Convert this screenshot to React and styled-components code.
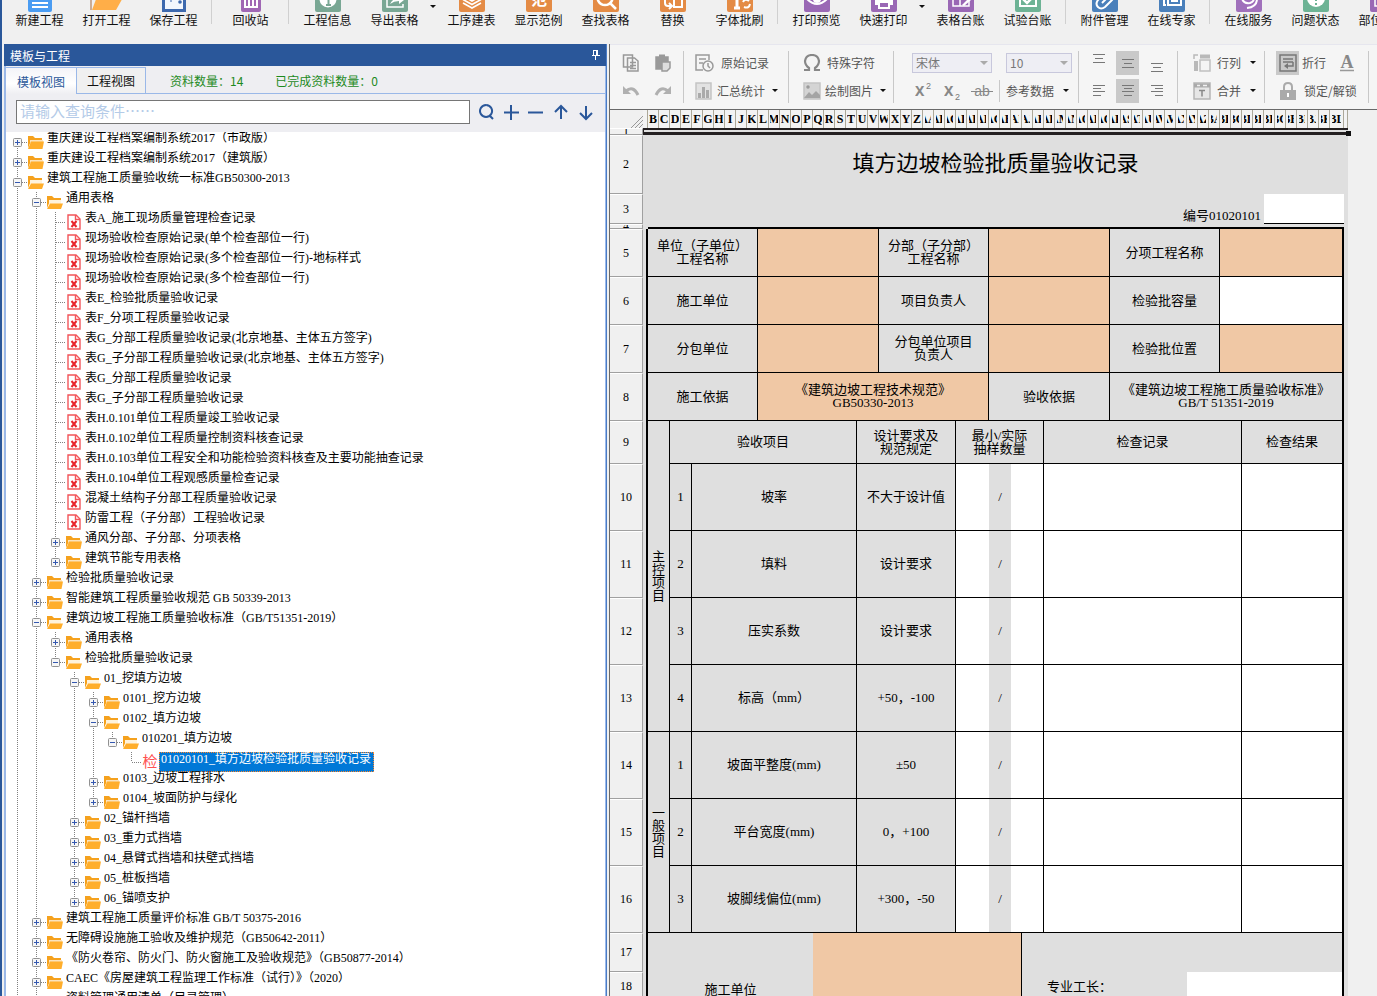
import { useState } from 'react'
import styled, { createGlobalStyle, css } from 'styled-components'

const SANS = "'Noto Sans CJK SC', sans-serif"
const SONG = "'Liberation Serif', 'Noto Sans CJK SC', serif"

const GlobalStyle = createGlobalStyle`
  * { box-sizing: border-box; }
  body {
    margin: 0;
    background: #f0f0f0;
    font-family: ${SANS};
    font-size: 12px;
    color: #000;
  }
  button, input, select {
    font-family: inherit;
    font-size: 12px;
    margin: 0;
    padding: 0;
  }
  svg { display: block; flex: none; }
`

const Page = styled.div`
  display: flex;
  flex-direction: column;
  height: 100vh;
  overflow: hidden;
  border-left: 2px solid #2a579a;
  background: #f0f0f0;
`

/* ---------- ribbon ---------- */
const Ribbon = styled.header`
  display: flex;
  align-items: flex-end;
  flex: none;
  height: 44px;
  padding: 0 0 16px 4px;
  overflow: hidden;
`
const RibbonButton = styled.button`
  display: flex;
  flex-direction: column;
  align-items: center;
  flex: none;
  width: 67px;
  border: none;
  background: none;
  line-height: 16px;
  white-space: nowrap;
  color: #111;
`
const RibbonArrow = styled.button`
  display: flex;
  align-items: center;
  justify-content: center;
  flex: none;
  width: 10px;
  height: 44px;
  border: none;
  background: none;
`
const RibbonDivider = styled.div`
  flex: none;
  width: 1px;
  height: 28px;
  margin: 0 5px 4px 4px;
  background: #d0d0d0;
`
const Triangle = styled.span`
  width: 0;
  height: 0;
  border: 3px solid transparent;
  border-top: 3px solid #111;
  border-bottom: none;
`

/* ---------- main area ---------- */
const Workspace = styled.main`
  display: flex;
  flex: 1;
  min-height: 0;
`
const SidePanel = styled.section`
  display: flex;
  flex-direction: column;
  flex: none;
  width: 605px;
  padding-left: 2px;
  border-right: 1px solid #4a7cc6;
`
const PanelTitle = styled.div`
  display: flex;
  align-items: center;
  justify-content: space-between;
  height: 22px;
  padding: 0 6px;
  background: #2a579a;
  color: #fff;
`
const PanelBody = styled.div`
  display: flex;
  flex-direction: column;
  flex: 1;
  min-height: 0;
  border: 1px solid #9ab8e8;
  border-width: 0 1px 0 2px;
  background: #eeeef2;
`
const TabBar = styled.div`
  display: flex;
  height: 28px;
  padding-top: 1px;
`
const Tab = styled.button`
  width: 70px;
  border: 1px solid #9ab8e8;
  background: #f0f0f0;
  color: #111;
  ${({ $active }) => $active && css`
    border-width: 1px 0 0 0;
    background: linear-gradient(#f4f4f8, #fff 60%, #eeeef2);
    color: #2a579a;
  `}
`
const Counters = styled.div`
  display: flex;
  align-items: center;
  flex: 1;
  gap: 32px;
  padding-left: 24px;
  border-bottom: 1px solid #9ab8e8;
  color: #1d8a1d;
`
const SearchRow = styled.div`
  display: flex;
  align-items: center;
  gap: 7px;
  height: 38px;
  padding: 0 10px 2px;
`
const SearchInput = styled.input`
  flex: 1;
  height: 24px;
  padding: 0 3px 4px;
  border: 1px solid #767676;
  border-radius: 0;
  background: #fff;
  font-size: 15px;
  &::placeholder { color: #b4cbe8; }
`
const ToolButton = styled.button`
  display: flex;
  align-items: center;
  justify-content: center;
  width: 18px;
  height: 24px;
  border: none;
  background: none;
`
const Tree = styled.ul`
  flex: 1;
  min-height: 0;
  margin: 0;
  padding: 0 0 0 2px;
  overflow: hidden;
  list-style: none;
  background: #fff;
  font-family: ${SONG};
`
const TreeRow = styled.li`
  display: flex;
  align-items: center;
  height: 20px;
`
const Expander = styled.button`
  display: block;
  border: none;
  background: none;
`
const NodeIcon = styled.span`
  display: flex;
  justify-content: center;
  flex: none;
  width: 18px;
`
const NodeLabel = styled.span`
  height: 20px;
  padding: 0 2px 0 1px;
  line-height: 13px;
  white-space: nowrap;
  border: 1px solid transparent;
  border-top: none;
  ${({ $selected }) => $selected && css`
    background: #0078d7;
    color: #fff;
    border: 1px dotted #ff8728;
    line-height: 12px;
  `}
`

/* ---------- editor toolbar ---------- */
const Editor = styled.section`
  display: flex;
  flex-direction: column;
  flex: 1;
  min-width: 0;
  margin-left: 2px;
  border-left: 1px solid #696969;
`
const Toolbar = styled.div`
  display: flex;
  align-items: center;
  flex: none;
  height: 66px;
  padding-bottom: 1px;
  overflow: hidden;
  background: #f5f5f5;
  border-top: 1px solid #e6e6ee;
  border-bottom: 1px solid #696969;
  color: #555;
`
const ToolGroup = styled.div`
  display: flex;
  flex-direction: column;
  flex: none;
  gap: 4px;
  width: ${({ $width }) => $width}px;
  height: 52px;
  padding-left: ${({ $pad }) => $pad || 11}px;
  border-right: 1px solid #c8c8c8;
`
const ToolLine = styled.div`
  display: flex;
  align-items: center;
  height: 24px;
  gap: ${({ $gap }) => $gap || 0}px;
`
const TextTool = styled.button`
  display: flex;
  align-items: center;
  gap: ${({ $gap }) => $gap || 6}px;
  height: 24px;
  border: none;
  background: none;
  color: #555;
  white-space: nowrap;
  ${Triangle} { margin-left: 3px; }
`
const IconTool = styled.button`
  display: flex;
  align-items: center;
  justify-content: center;
  width: 23px;
  height: 24px;
  border: none;
  background: ${({ $active }) => ($active ? '#c9c9c9' : 'none')};
`
const SelectBox = styled.div`
  position: relative;
  width: ${({ $width }) => $width}px;
  ${Triangle} {
    position: absolute;
    right: 4px;
    top: 8px;
    border-width: 4px;
    border-bottom: none;
    border-top-color: #aaa;
    pointer-events: none;
  }
`
const Select = styled.select`
  appearance: none;
  display: block;
  width: 100%;
  height: 20px;
  padding-left: 3px;
  border: 1px solid #c8c8dc;
  border-radius: 0;
  background: #eeeef4;
  color: #777;
`
const SmallDivider = styled.span`
  width: 1px;
  height: 22px;
  background: #c8c8c8;
`

/* ---------- sheet ---------- */
const SheetArea = styled.div`
  flex: 1;
  min-height: 0;
  overflow: hidden;
`
const Sheet = styled.table`
  table-layout: fixed;
  width: 738px;
  border-collapse: separate;
  border-spacing: 0;
  background: #dfdfdf;
  font-family: ${SONG};
  font-size: 13px;
  line-height: 13px;
`
const ColHead = styled.th`
  height: 18px;
  padding: 0 1px;
  border-right: 1px solid #aca899;
  background: #f3f3f3;
  font-size: 12px;
  font-weight: bold;
  div {
    display: flex;
    justify-content: center;
    overflow: hidden;
    margin: 0 ${({ $wide }) => ($wide ? 1 : 0)}px;
  }
`
const Corner = styled.th`
  padding: 0;
  background: #f0f0f0;
  vertical-align: bottom;
  svg { margin-left: auto; }
`
const RowHead = styled.th`
  height: ${({ $h }) => $h}px;
  padding: 0;
  border-top: 1px solid #fff;
  border-right: 1px solid #a0a0a0;
  border-bottom: 1px solid #a0a0a0;
  background: #f0f0f0;
  font-weight: normal;
  font-size: 12px;
  text-align: center;
  div {
    height: ${({ $h }) => Math.min($h - 2, 13)}px;
    line-height: ${({ $h }) => Math.min($h - 2, 13)}px;
    overflow: hidden;
  }
`
const fills = { gray: '#dfdfdf', peach: '#f0c8a5', white: '#fff' }
const Cell = styled.td`
  padding: 0 0 1px;
  text-align: center;
  white-space: pre-line;
  background: ${({ $fill }) => fills[$fill || 'gray']};
  border-bottom: ${({ $open }) => ($open ? 'none' : '1px solid #000')};
  border-right: ${({ $open, $last, $noRight }) => ($last ? '2px solid #000' : $open || $noRight ? 'none' : '1px solid #000')};
`
const EdgeCell = styled.td`
  padding: 0;
  border-right: 2px solid #000;
`
const PlainCell = styled.td`
  padding: 0 3px;
  text-align: ${({ $align }) => $align || 'left'};
`
const TitleCell = styled(PlainCell)`
  padding-bottom: 8px;
  font-family: ${SANS};
  font-size: 22px;
  line-height: 28px;
`
const NumberCell = styled(PlainCell)`
  vertical-align: bottom;
  padding-bottom: 2px;
`
const NumberBox = styled.td`
  padding: 0;
  background: #fff;
  border-bottom: 1px solid #000;
`
const TopEdge = styled.td`
  padding: 0;
  border-bottom: 2px solid #000;
`
const SelectedRange = styled.td`
  position: relative;
  padding: 0;
  border: solid #231f20;
  border-width: 2px 0 3px 1px;
  &::after {
    content: '';
    position: absolute;
    right: -3px;
    top: 1px;
    width: 5px;
    height: 5px;
    background: #111;
  }
`

/* ---------- drawings ---------- */
const ribbonArt = {
  new: (
    <>
      <rect x="1" width="24" height="26" rx="2" fill="#4a9cf2" />
      <path d="M5 13h16M5 17h16M5 21h16" stroke="#fff" strokeWidth="2" />
    </>
  ),
  open: (
    <>
      <path d="M-3 24V6h24v6" fill="none" stroke="#a5683c" />
      <path d="M4 8h27l-9 16H-2z" fill="#ffae48" />
    </>
  ),
  save: (
    <>
      <rect x="2.5" y="1.5" width="21" height="23" fill="#f3f7fd" stroke="#3d69ae" strokeWidth="3" />
      <circle cx="19" cy="16" r="1.8" fill="#3d69ae" />
      <path d="M10 12v4" stroke="#3d69ae" />
    </>
  ),
  bin: (
    <>
      <path d="M3 6h20v18q0 2-2 2H5q-2 0-2-2z" fill="#a067b4" />
      <path d="M7 8h12v13H7zM11 8v13M15 8v13" fill="none" stroke="#fff" strokeWidth="2" />
    </>
  ),
  info: (
    <>
      <circle cx="13" cy="13" r="8.5" fill="#fff" />
      <path d="M11 12h2.5v7M11 19h5" stroke="#79a794" strokeWidth="2" fill="none" />
    </>
  ),
  exportTable: (
    <>
      <path d="M5 10v11h16v-3" stroke="#fff" strokeWidth="1.5" fill="none" />
      <path d="M8 18q3-6 9-6V9l5 5-5 4v-3q-5 0-9 3z" fill="#fff" />
    </>
  ),
  layers: (
    <path d="M13 5l9 5-9 5-9-5zM4 13.500l9 5 9-5M4 17l9 5 9-5" stroke="#fff" strokeWidth="1.600" fill="none" />
  ),
  sample: <text x="13" y="19" textAnchor="middle" fontSize="16" fontWeight="bold" fill="#fff">范</text>,
  find: (
    <path d="M12 4a7.500 7.500 0 1 0 .1 0M17 17l6 6" stroke="#fff" strokeWidth="2.500" fill="none" />
  ),
  replace: (
    <>
      <rect x="14" y="13" width="8" height="8" fill="none" stroke="#fff" strokeWidth="2" />
      <path d="M5 12v5q0 3 3 3h3M9 17l3 3-3 3" stroke="#fff" strokeWidth="2" fill="none" />
    </>
  ),
  fontBrush: (
    <>
      <path d="M4 8h12M10 8v14M7 22h6" stroke="#fff" strokeWidth="3" />
      <path d="M16 16q2-4 6-1M23 18q-1 5-6 3" stroke="#fff" strokeWidth="2" fill="none" />
    </>
  ),
  eye: (
    <>
      <path d="M3 13q10-10 20 0-10 10-20 0z" fill="none" stroke="#fff" strokeWidth="2" />
      <circle cx="13" cy="13" r="4" fill="#fff" />
    </>
  ),
  printer: (
    <>
      <path d="M4 10h18v9H4z" fill="#fff" />
      <path d="M8 16h10v6H8z" fill="#9a68b5" stroke="#fff" strokeWidth="2" />
    </>
  ),
  ledger: (
    <>
      <path d="M5 5h16v15H5zM5 13h16M12 5v15" fill="none" stroke="#fff" strokeWidth="1.500" />
      <path d="M14 19l7-7 2 2-7 6z" fill="#fff" />
    </>
  ),
  check: (
    <>
      <path d="M5 5h16v15H5z" fill="none" stroke="#fff" strokeWidth="2" />
      <path d="M8 13l4 4 7-7" fill="none" stroke="#fff" strokeWidth="2.500" />
    </>
  ),
  clip: (
    <path d="M10 17l7-7q3-2 4 0t-1 4l-7 7q-4 3-7 0t0-7l6-6" fill="none" stroke="#fff" strokeWidth="2" />
  ),
  expert: (
    <>
      <path d="M9 6h13v13H9zM5 10v9h2" fill="none" stroke="#fff" strokeWidth="2" />
      <path d="M12 15h7" stroke="#fff" strokeWidth="2" />
    </>
  ),
  headset: (
    <path d="M5 14q0-8 8-8t8 8M6 12q1 6 8 5q5-2 3-5M21 14q-1 7-10 8" fill="none" stroke="#fff" strokeWidth="2" />
  ),
  question: (
    <>
      <circle cx="13" cy="12" r="9" fill="#fff" />
      <path d="M10 9q3-4 5-1t-2 5v2M13 17v2" fill="none" stroke="#6db395" strokeWidth="2" />
    </>
  ),
}

const RibbonIcon = ({ name, color }) => (
  <svg width="26" height="26" overflow="visible" aria-hidden="true">
    {color && <rect width="26" height="26" rx="2" fill={color} />}
    {ribbonArt[name]}
  </svg>
)

const GREEN = '#79a794'
const ORANGE = '#e48b45'
const PURPLE = '#9a68b5'
const BLUE = '#4a80bb'
const ribbonItems = [
  ['新建工程', 'new'], ['打开工程', 'open'], ['保存工程', 'save'], '|',
  ['回收站', 'bin'], '|',
  ['工程信息', 'info', GREEN], ['导出表格', 'exportTable', GREEN], 'v',
  ['工序建表', 'layers', ORANGE], ['显示范例', 'sample', ORANGE], ['查找表格', 'find', ORANGE],
  ['替换', 'replace', ORANGE], ['字体批刷', 'fontBrush', ORANGE], '|',
  ['打印预览', 'eye', PURPLE], ['快速打印', 'printer', PURPLE], 'v',
  ['表格台账', 'ledger', PURPLE], ['试验台账', 'check', '#6db395'], '|',
  ['附件管理', 'clip', BLUE], ['在线专家', 'expert', BLUE], '|',
  ['在线服务', 'headset', '#a070bb'], ['问题状态', 'question', '#6db395'], ['部位管理', 'ledger', PURPLE],
]

const FolderIcon = ({ open }) => (
  <svg width="16" height="13" aria-hidden="true">
    <path d="M0 0h5l2 2h7v3H3L0 12z" fill="#f5a11d" />
    {open
      ? <><path d="M2 4h12v4H2z" fill="#fff3dc" /><path d="M3 7.500h13L14 13H0z" fill="#ffae2b" /></>
      : <><path d="M2 4h13v2H2z" fill="#fbe3bc" /><path d="M3 5.500h13L14.500 13H0z" fill="#ffae2b" /></>}
  </svg>
)

const FileIcon = () => (
  <svg width="14" height="16" aria-hidden="true">
    <path d="M1 1h8l4 4v10H1z" fill="#fff" stroke="#f2555a" strokeWidth="1.400" />
    <path d="M8.500 1v4.500H13" fill="none" stroke="#f2555a" strokeWidth="1.400" />
    <path d="M4.500 7l5 6M9.500 7l-5 6" stroke="#e8252c" strokeWidth="2" />
  </svg>
)

const CheckGlyph = styled.span`
  color: #ff5050;
  font-size: 15px;
  line-height: 18px;
`

/* one 19x20 cell of the dotted guide lines */
const Guide = ({ up, down, across, box, open }) => (
  <svg width="19" height="20" aria-hidden="true">
    <g stroke="#808080" strokeDasharray="1 1">
      {up && <path d="M9.500 0V10" />}
      {down && <path d="M9.500 10V20" />}
      {across && <path d="M10 10.500H19" />}
    </g>
    {box && (
      <>
        <rect x="5.500" y="6.500" width="8" height="8" rx="1" fill="#f6f6f6" stroke="#919191" />
        <path d={open ? 'M7 10.500h5' : 'M7 10.500h5M9.500 8v5'} stroke="#3458b0" />
      </>
    )}
  </svg>
)

/* [depth, kind, label] : + closed folder, - open folder, f form, s selected form */
const nodes = [
  [0, '+', '重庆建设工程档案编制系统2017（市政版）'],
  [0, '+', '重庆建设工程档案编制系统2017（建筑版）'],
  [0, '-', '建筑工程施工质量验收统一标准GB50300-2013'],
  [1, '-', '通用表格'],
  [2, 'f', '表A_施工现场质量管理检查记录'],
  [2, 'f', '现场验收检查原始记录(单个检查部位一行)'],
  [2, 'f', '现场验收检查原始记录(多个检查部位一行)-地标样式'],
  [2, 'f', '现场验收检查原始记录(多个检查部位一行)'],
  [2, 'f', '表E_检验批质量验收记录'],
  [2, 'f', '表F_分项工程质量验收记录'],
  [2, 'f', '表G_分部工程质量验收记录(北京地基、主体五方签字)'],
  [2, 'f', '表G_子分部工程质量验收记录(北京地基、主体五方签字)'],
  [2, 'f', '表G_分部工程质量验收记录'],
  [2, 'f', '表G_子分部工程质量验收记录'],
  [2, 'f', '表H.0.101单位工程质量竣工验收记录'],
  [2, 'f', '表H.0.102单位工程质量控制资料核查记录'],
  [2, 'f', '表H.0.103单位工程安全和功能检验资料核查及主要功能抽查记录'],
  [2, 'f', '表H.0.104单位工程观感质量检查记录'],
  [2, 'f', '混凝土结构子分部工程质量验收记录'],
  [2, 'f', '防雷工程（子分部）工程验收记录'],
  [2, '+', '通风分部、子分部、分项表格'],
  [2, '+', '建筑节能专用表格'],
  [1, '+', '检验批质量验收记录'],
  [1, '+', '智能建筑工程质量验收规范 GB 50339-2013'],
  [1, '-', '建筑边坡工程施工质量验收标准（GB/T51351-2019）'],
  [2, '+', '通用表格'],
  [2, '-', '检验批质量验收记录'],
  [3, '-', '01_挖填方边坡'],
  [4, '+', '0101_挖方边坡'],
  [4, '-', '0102_填方边坡'],
  [5, '-', '010201_填方边坡'],
  [6, 's', '01020101_填方边坡检验批质量验收记录'],
  [4, '+', '0103_边坡工程排水'],
  [4, '+', '0104_坡面防护与绿化'],
  [3, '+', '02_锚杆挡墙'],
  [3, '+', '03_重力式挡墙'],
  [3, '+', '04_悬臂式挡墙和扶壁式挡墙'],
  [3, '+', '05_桩板挡墙'],
  [3, '+', '06_锚喷支护'],
  [1, '+', '建筑工程施工质量评价标准 GB/T 50375-2016'],
  [1, '+', '无障碍设施施工验收及维护规范（GB50642-2011）'],
  [1, '+', '《防火卷帘、防火门、防火窗施工及验收规范》（GB50877-2014）'],
  [1, '+', 'CAEC《房屋建筑工程监理工作标准（试行）》（2020）'],
  [1, '+', '资料管理通用清单（目录管理）'],
]

// whether the guide line at this depth goes on below row i
const continues = (i, depth) => {
  if (depth < 2) return true
  for (let j = i + 1; j < nodes.length; j++) {
    if (nodes[j][0] < depth) return false
    if (nodes[j][0] === depth) return true
  }
  return false
}

const TreeView = () => (
  <Tree>
    {nodes.map(([depth, kind, label], i) => {
      const folder = kind === '+' || kind === '-'
      const open = kind === '-'
      const guide = <Guide up={i > 0} down={continues(i, depth)} across box={folder} open={open} />
      return (
        <TreeRow key={i}>
          {Array.from({ length: depth }, (_, d) => {
            const on = continues(i, d)
            return <Guide key={d} up={on} down={on} />
          })}
          {folder ? <Expander aria-label={label}>{guide}</Expander> : guide}
          <NodeIcon>
            {folder && <FolderIcon open={open} />}
            {kind === 'f' && <FileIcon />}
            {kind === 's' && <CheckGlyph>检</CheckGlyph>}
          </NodeIcon>
          <NodeLabel $selected={kind === 's'}>{label}</NodeLabel>
        </TreeRow>
      )
    })}
  </Tree>
)

const panelTools = [
  ['查找', 'M8 2a6 6 0 1 0 .1 0M12 13l3 3'],
  ['展开', 'M8 2v15M1 9.500h15'],
  ['收起', 'M0 9.500h15'],
  ['上移', 'M8 16V3M2 9l6-6 6 6'],
  ['下移', 'M8 3v13M2 10l6 6 6-6'],
]

const Gray = ({ children, w = 18 }) => (
  <svg width={w} height="18" fill="none" stroke="#999" strokeWidth="1.500" aria-hidden="true">{children}</svg>
)

const CopyIcon = () => <Gray><path d="M1.500 1h9v12h-9zM5.500 4h7l3.500 3v10H5.500z" fill="#f5f5f5" /><path d="M8 8.500h6M8 11.500h6M8 14.500h6" /></Gray>
const PasteIcon = () => <Gray><path d="M2 3h12v12H2z" fill="#999" /><path d="M5 2h6" strokeWidth="3" /><path d="M8 8h8v6l-3 3H8z" fill="#ddd" /></Gray>
const UndoIcon = () => <Gray><path d="M1 4v8h8z" fill="#b0b0b0" stroke="none" /><path d="M4 9q7-6 12 4" stroke="#b0b0b0" strokeWidth="3" /></Gray>
const RedoIcon = () => <Gray><path d="M17 4v8H9z" fill="#b0b0b0" stroke="none" /><path d="M14 9Q7 3 2 13" stroke="#b0b0b0" strokeWidth="3" /></Gray>
const RecordIcon = () => <Gray w={20}><path d="M14 6V1H1v15h7M4 5h7M4 9h4" /><circle cx="13" cy="12" r="5" fill="#f5f5f5" /><path d="M13 9v3l2 2" /></Gray>
const ChartIcon = () => <Gray><path d="M1 1h15v16H1z" stroke="#c4c4c4" fill="#e2e2e2" /><path d="M4.500 16v-5M8.500 16V5M12.500 16V8" strokeWidth="3" stroke="#aaa" /></Gray>
const OmegaIcon = () => <Gray><path d="M1 16h5v-2Q2 11 2 7q1-6 7-6t7 6q0 4-4 7v2h5" stroke="#888" strokeWidth="2.200" /></Gray>
const PictureIcon = () => <Gray><path d="M1 1h16v16H1z" fill="#d4d4d4" stroke="#c4c4c4" /><path d="M1 16l5-6 3 3 4-4 4 4v3z" fill="#a4a4a4" stroke="none" /><circle cx="5" cy="5" r="1" /></Gray>
const RowColIcon = () => <Gray><path d="M7 6h10v11H7z" stroke="#c0c0c0" /><path d="M7 2.500h10M3 7v10" strokeWidth="4" stroke="#b9b9b9" /><path d="M1 5V1h4" stroke="#b9b9b9" /></Gray>
const MergeIcon = () => <Gray><path d="M1 1h16v16H1z" fill="#e6e6e6" stroke="#b5b5b5" /><path d="M1 3.500h16" strokeWidth="4" stroke="#aaa" /><path d="M4 3.500h3M10 3.500h4" stroke="#f0f0f0" /><path d="M6 8.500h6M9 8.500v6" stroke="#888" /></Gray>
const WrapIcon = () => <Gray><path d="M1 1h16v16H1z" stroke="#777" /><path d="M4 5h10M4 8h10M14 8v4H9" stroke="#777" /><path d="M9 9v6l-4-3z" fill="#777" stroke="none" /></Gray>
const LockIcon = () => <Gray w={16}><path d="M4 9V5q0-4 4-4t4 4v4" strokeWidth="2" stroke="#aaa" /><path d="M0 8h16v10H0z" fill="#aaa" stroke="none" /><path d="M8 11v4" stroke="#fff" strokeWidth="2" /></Gray>
const FontColorIcon = () => (
  <Gray>
    <text x="9" y="14" textAnchor="middle" fontSize="18" fontWeight="bold" fontFamily="Liberation Serif" fill="#888" stroke="none">A</text>
    <path d="M2 16.500h14" stroke="#999" />
  </Gray>
)
const StrikeIcon = () => (
  <Gray w={22}>
    <text x="11" y="14" textAnchor="middle" fontSize="14" fontFamily="Liberation Sans" fill="#888" stroke="none">ab</text>
    <path d="M0 9.500h22" stroke="#888" strokeWidth="1" />
  </Gray>
)
const ScriptIcon = ({ sup }) => (
  <Gray>
    <text x="0" y="14" fontSize="14" fontWeight="bold" fontFamily="Noto Sans" fill="#888" stroke="none">X</text>
    <text x="11" y={sup ? 7 : 18} fontSize="9" fontFamily="Liberation Sans" fill="#777" stroke="none">2</text>
  </Gray>
)

const alignTools = [
  [['顶端对齐', 'M3 0.500h12M5 4.500h8M3 8.500h12'], ['垂直居中', 'M3 5.500h12M5 9.500h8M3 13.500h12', true], ['底端对齐', 'M3 9.500h12M5 13.500h8M3 17.500h12']],
  [['左对齐', 'M3 3.500h12M3 6.500h8M3 9.500h12M3 13.500h8'], ['水平居中', 'M3 3.500h12M5 6.500h8M3 9.500h12M5 13.500h8', true], ['右对齐', 'M3 3.500h12M7 6.500h8M3 9.500h12M7 13.500h8']],
]

const EditorToolbar = () => (
  <Toolbar>
    <ToolGroup $width={74} $pad={9}>
      <ToolLine $gap={9}>
        <IconTool aria-label="复制"><CopyIcon /></IconTool>
        <IconTool aria-label="粘贴"><PasteIcon /></IconTool>
      </ToolLine>
      <ToolLine $gap={9}>
        <IconTool aria-label="撤销"><UndoIcon /></IconTool>
        <IconTool aria-label="重做"><RedoIcon /></IconTool>
      </ToolLine>
    </ToolGroup>
    <ToolGroup $width={105}>
      <ToolLine><TextTool><RecordIcon />原始记录</TextTool></ToolLine>
      <ToolLine><TextTool $gap={4}><ChartIcon />汇总统计<Triangle /></TextTool></ToolLine>
    </ToolGroup>
    <ToolGroup $width={105} $pad={14}>
      <ToolLine><TextTool><OmegaIcon />特殊字符</TextTool></ToolLine>
      <ToolLine><TextTool $gap={4}><PictureIcon />绘制图片<Triangle /></TextTool></ToolLine>
    </ToolGroup>
    <ToolGroup $width={185} $pad={18}>
      <ToolLine $gap={14}>
        <SelectBox $width={80}>
          <Select aria-label="字体"><option>宋体</option></Select>
          <Triangle />
        </SelectBox>
        <SelectBox $width={66}>
          <Select aria-label="字号"><option>10</option></Select>
          <Triangle />
        </SelectBox>
      </ToolLine>
      <ToolLine $gap={6}>
        <IconTool aria-label="上标"><ScriptIcon sup /></IconTool>
        <IconTool aria-label="下标"><ScriptIcon /></IconTool>
        <IconTool aria-label="删除线"><StrikeIcon /></IconTool>
        <SmallDivider />
        <TextTool><span>参考数据</span><Triangle /></TextTool>
      </ToolLine>
    </ToolGroup>
    <ToolGroup $width={99} $pad={8}>
      {alignTools.map((line, i) => (
        <ToolLine key={i} $gap={6}>
          {line.map(([label, d, active]) => (
            <IconTool key={label} aria-label={label} $active={active}>
              <Gray><path d={d} stroke="#777" strokeWidth="1" /></Gray>
            </IconTool>
          ))}
        </ToolLine>
      ))}
    </ToolGroup>
    <ToolGroup $width={87} $pad={15}>
      <ToolLine><TextTool><RowColIcon />行列<Triangle /></TextTool></ToolLine>
      <ToolLine><TextTool><MergeIcon />合并<Triangle /></TextTool></ToolLine>
    </ToolGroup>
    <ToolGroup $width={104}>
      <ToolLine $gap={3}>
        <IconTool aria-label="自动折行" $active><WrapIcon /></IconTool>
        <TextTool>折行</TextTool>
        <div />
        <div />
        <IconTool aria-label="字体颜色"><FontColorIcon /></IconTool>
      </ToolLine>
      <ToolLine><TextTool $gap={4}><span /><LockIcon /><span />锁定/解锁</TextTool></ToolLine>
    </ToolGroup>
  </Toolbar>
)

/* columns B..BL */
const letters = Array.from({ length: 63 }, (_, i) => {
  const n = i + 1
  const last = String.fromCharCode(65 + (n % 26))
  return n < 26 ? last : String.fromCharCode(64 + Math.floor(n / 26)) + last
})

const infoRows = [
  [5, '单位（子单位）\n工程名称', '分部（子分部）\n工程名称', '分项工程名称', 'peach'],
  [6, '施工单位', '项目负责人', '检验批容量', 'white'],
  [7, '分包单位', '分包单位项目\n负责人', '检验批位置', 'peach'],
]

const checkRows = [
  [10, '1', '坡率', '不大于设计值'],
  [11, '2', '填料', '设计要求'],
  [12, '3', '压实系数', '设计要求'],
  [13, '4', '标高（mm）', '+50，-100'],
  [14, '1', '坡面平整度(mm)', '±50'],
  [15, '2', '平台宽度(mm)', '0，+100'],
  [16, '3', '坡脚线偏位(mm)', '+300，-50'],
]

const Head = ({ n, h }) => <RowHead scope="row" $h={h}><div>{n}</div></RowHead>

const SheetTable = () => (
  <Sheet>
    <colgroup>
      <col width="33" />
      <col width="5" />
      {letters.map((l, i) => <col key={l} width={i === 62 ? 14 : 11} />)}
      <col width="4" />
    </colgroup>
    <thead>
      <tr>
        <Corner>
          <svg width="13" height="13" stroke="#999" aria-hidden="true">
            <path d="M1 13L13 1M5 13l8-8M9 13l4-4" />
          </svg>
        </Corner>
        <ColHead />
        {letters.map((l) => <ColHead key={l} scope="col" $wide={l.length > 1}><div>{l}</div></ColHead>)}
        <ColHead />
      </tr>
    </thead>
    <tbody>
      <tr>
        <Head n={1} h={7} />
        <SelectedRange colSpan={65} />
      </tr>
      <tr>
        <Head n={2} h={59} />
        <TitleCell colSpan={65} $align="center">填方边坡检验批质量验收记录</TitleCell>
      </tr>
      <tr>
        <Head n={3} h={30} />
        <NumberCell colSpan={57} $align="right">编号01020101</NumberCell>
        <NumberBox colSpan={7} />
        <td />
      </tr>
      <tr>
        <Head n={4} h={5} />
        <PlainCell />
        <TopEdge colSpan={63} />
        <PlainCell />
      </tr>
      {infoRows.map(([n, a, b, c, fill]) => (
        <tr key={n}>
          <Head n={n} h={48} />
          <EdgeCell />
          <Cell colSpan={10}>{a}</Cell>
          <Cell colSpan={11} $fill="peach" />
          <Cell colSpan={10}>{b}</Cell>
          <Cell colSpan={11} $fill="peach" />
          <Cell colSpan={10}>{c}</Cell>
          <Cell colSpan={11} $fill={fill} $last />
          <td />
        </tr>
      ))}
      <tr>
        <Head n={8} h={48} />
        <EdgeCell />
        <Cell colSpan={10}>施工依据</Cell>
        <Cell colSpan={21} $fill="peach">{'《建筑边坡工程技术规范》\nGB50330-2013'}</Cell>
        <Cell colSpan={11}>验收依据</Cell>
        <Cell colSpan={21} $last>{'《建筑边坡工程施工质量验收标准》\nGB/T 51351-2019'}</Cell>
        <td />
      </tr>
      <tr>
        <Head n={9} h={43} />
        <EdgeCell />
        <Cell colSpan={2} rowSpan={5}>{'主\n控\n项\n目'}</Cell>
        <Cell colSpan={17}>验收项目</Cell>
        <Cell colSpan={9}>{'设计要求及\n规范规定'}</Cell>
        <Cell colSpan={8}>{'最小/实际\n抽样数量'}</Cell>
        <Cell colSpan={18}>检查记录</Cell>
        <Cell colSpan={9} $last>检查结果</Cell>
        <td />
      </tr>
      {checkRows.map(([n, no, item, rule]) => (
        <tr key={n}>
          <Head n={n} h={67} />
          <EdgeCell />
          {n === 14 && <Cell colSpan={2} rowSpan={3}>{'一\n般\n项\n目'}</Cell>}
          <Cell colSpan={2}>{no}</Cell>
          <Cell colSpan={15}>{item}</Cell>
          <Cell colSpan={9}>{rule}</Cell>
          <Cell colSpan={3} $fill="white" $noRight />
          <Cell colSpan={2} $noRight>/</Cell>
          <Cell colSpan={3} $fill="white" />
          <Cell colSpan={18} $fill="white" />
          <Cell colSpan={9} $fill="white" $last />
          <td />
        </tr>
      ))}
      <tr>
        <Head n={17} h={39} />
        <EdgeCell />
        <Cell colSpan={15} rowSpan={3} $open>施工单位</Cell>
        <Cell colSpan={19} rowSpan={3} $fill="peach" />
        <Cell colSpan={29} $open $last />
        <td />
      </tr>
      <tr>
        <Head n={18} h={29} />
        <EdgeCell />
        <PlainCell colSpan={2} />
        <PlainCell colSpan={13}>专业工长：</PlainCell>
        <Cell colSpan={14} $fill="white" $last />
        <td />
      </tr>
      <tr>
        <Head n={19} h={46} />
        <EdgeCell />
        <Cell colSpan={29} $last />
        <td />
      </tr>
    </tbody>
  </Sheet>
)

export default function App() {
  const [query, setQuery] = useState('')
  const [tab, setTab] = useState(0)

  return (
    <Page>
      <GlobalStyle />
      <Ribbon>
        {ribbonItems.map((item, i) => {
          if (item === '|') return <RibbonDivider key={i} />
          if (item === 'v') return <RibbonArrow key={i} aria-label="更多"><Triangle /></RibbonArrow>
          return (
            <RibbonButton key={i}>
              <RibbonIcon name={item[1]} color={item[2]} />
              {item[0]}
            </RibbonButton>
          )
        })}
      </Ribbon>
      <Workspace>
        <SidePanel>
          <PanelTitle>
            模板与工程
            <svg width="8" height="10" aria-hidden="true">
              <path d="M1 0h5v5h2v1H0V5h1zM3 6h1v4H3z" fill="#fff" />
              <path d="M2 1h2v4H2z" fill="#2a579a" />
            </svg>
          </PanelTitle>
          <PanelBody>
            <TabBar>
              {['模板视图', '工程视图'].map((name, i) => (
                <Tab key={name} $active={tab === i} onClick={() => setTab(i)}>{name}</Tab>
              ))}
              <Counters>
                <span>资料数量：14</span>
                <span>已完成资料数量：0</span>
              </Counters>
            </TabBar>
            <SearchRow>
              <SearchInput
                aria-label="查询条件"
                placeholder="请输入查询条件……"
                value={query}
                onChange={(e) => setQuery(e.target.value)}
              />
              {panelTools.map(([label, d]) => (
                <ToolButton key={label} aria-label={label}>
                  <svg width="16" height="18" fill="none" stroke="#2a579a" strokeWidth="2" aria-hidden="true">
                    <path d={d} />
                  </svg>
                </ToolButton>
              ))}
            </SearchRow>
            <TreeView />
          </PanelBody>
        </SidePanel>
        <Editor>
          <EditorToolbar />
          <SheetArea>
            <SheetTable />
          </SheetArea>
        </Editor>
      </Workspace>
    </Page>
  )
}
